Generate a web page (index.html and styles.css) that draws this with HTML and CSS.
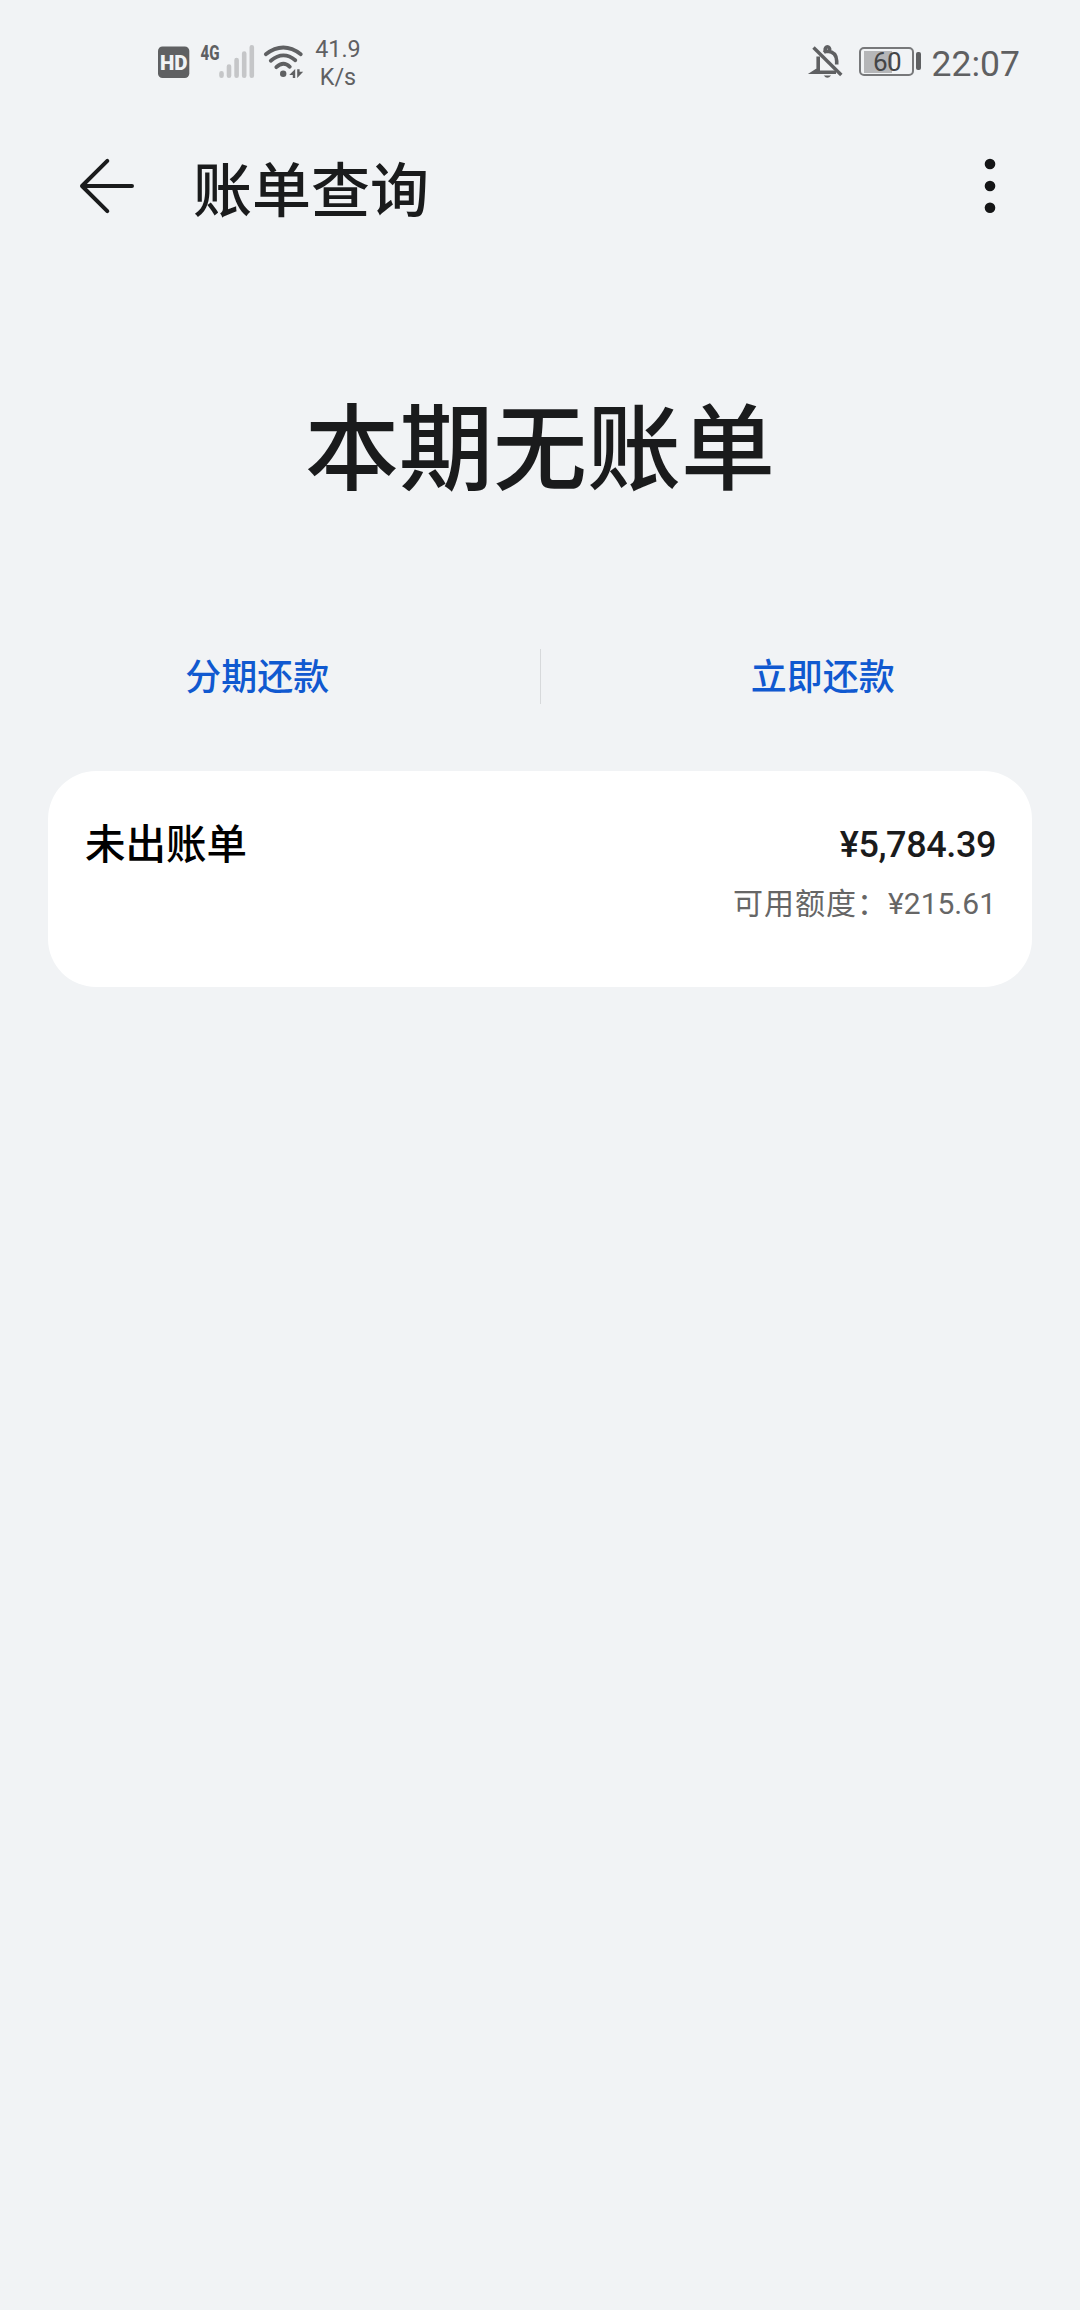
FILE: index.html
```html
<!DOCTYPE html>
<html lang="zh-CN">
<head>
<meta charset="utf-8">
<title>账单查询</title>
<link rel="stylesheet" href="styles.css">
</head>
<body>
<div class="status">
  <div class="status-left">
    <svg class="icon" width="32" height="32" viewBox="158 46 32 32"><rect x="158" y="46.5" width="31.3" height="31.5" rx="4.5" fill="#5f6062"/><text x="160" y="70.1" class="hd" textLength="27.6" lengthAdjust="spacingAndGlyphs">HD</text></svg>
    <svg class="icon signal" width="56" height="36" viewBox="200 44 56 36"><text x="200.6" y="60" class="net" textLength="19" lengthAdjust="spacingAndGlyphs">4G</text><path d="M221.5 73.3v2.4M229 66.5v9.2M236.6 60v15.7M244.2 53.5v22.2M251.8 47.3v28.4" stroke="#c5c6c8" stroke-width="4.6" stroke-linecap="round"/></svg>
    <svg class="icon wifi" width="42" height="36" viewBox="263 44 42 36" fill="none" stroke="#5f6062" stroke-width="3.8" stroke-linecap="round"><path d="M265.8 54.2Q283.3 40.7 300.8 54.2M270.8 60.7Q283.3 50.2 295.3 60.3M276.3 67.2Q283.3 60.5 289.8 66.8"/><circle cx="283.2" cy="73.8" r="3.2" fill="#5f6062" stroke="none"/><path d="M295.2 69v9h-2.4v-3h-3.6zM297.2 78v-8.8h2.4v2.6h3.6z" fill="#5f6062" stroke="none"/></svg>
    <div class="speed"><span>41.9</span><span>K/s</span></div>
  </div>
  <div class="status-right">
    <svg class="icon" width="32" height="36" viewBox="811 43 32 36" fill="none" stroke="#5f6062" stroke-width="3.6"><path d="M818.2 56.5V69.5L814 72.2H836M823.8 52.4Q825.5 51.2 827.7 51.2Q836.4 51.8 836.7 61V64.5M825.2 50.5C824.6 45.5 830.2 45.5 829.7 50.5"/><path d="M813.5 47.5L841.3 75" stroke-width="3.4"/><path d="M823.7 75.5h7.4q-3.7 4.4-7.4 0z" fill="#5f6062" stroke="none"/></svg>
    <div class="battery"><span class="charge"></span><span class="percent">60</span></div>
    <span class="cap"></span>
    <span class="clock">22:07</span>
  </div>
</div>
<header class="bar">
  <svg class="icon" width="58" height="58" viewBox="78 157 58 58" fill="none" stroke="#1a1b1c" stroke-width="4" stroke-linecap="round" stroke-linejoin="round"><path d="M107.3 160.8L82 186L107.3 211.2M82.5 186H132"/></svg>
  <h1 class="title">账单查询</h1>
  <svg class="icon" width="12" height="58" viewBox="984 157 12 58" fill="#141516"><circle cx="990" cy="164" r="5.3"/><circle cx="990" cy="186" r="5.3"/><circle cx="990" cy="207.8" r="5.3"/></svg>
</header>
<main>
  <h2 class="headline">本期无账单</h2>
  <nav class="actions">
    <a class="action">分期还款</a>
    <span class="divider"></span>
    <a class="action">立即还款</a>
  </nav>
  <section class="card">
    <span class="card-title">未出账单</span>
    <div class="amounts">
      <span class="amount">¥5,784.39</span>
      <span class="limit"><span class="limit-label">可用额度：</span>¥215.61</span>
    </div>
  </section>
</main>
</body>
</html>
```
FILE: styles.css
```css
* { box-sizing: border-box; }
body {
  margin: 0;
  min-height: 2310px;
  background: #f1f3f5;
  color: #1a1b1c;
  font-family: Roboto, "Noto Sans CJK SC", sans-serif;
}
.icon { display: block; flex: none; overflow: visible; }
.status {
  display: flex;
  justify-content: space-between;
  height: 124px;
  padding: 0 60px 0 158px;
  color: #5f6062;
}
.status-left, .status-right { display: flex; align-items: flex-start; }
.status-left .icon { margin-top: 46px; }
.status-left .signal { margin: 44px 0 0 10px; }
.status-left .wifi { margin: 44px 0 0 7px; }
.hd { font: 900 20.5px Roboto, sans-serif; fill: #f1f3f5; }
.net { font: 800 20px Roboto, sans-serif; fill: #5f6062; }
.speed {
  display: flex;
  flex-direction: column;
  align-items: center;
  width: 50px;
  margin: 35px 0 0 8px;
  font-size: 23.3px;
  line-height: 28px;
}
.status-right .icon { margin-top: 43px; }
.battery {
  position: relative;
  width: 55px;
  height: 29px;
  margin: 47px 0 0 16px;
  padding: 3px;
  border: 2px solid #77787a;
  border-radius: 5px;
}
.charge { display: block; width: 28px; height: 22px; margin-top: -1px; background: #b5b6b8; }
.percent {
  position: absolute;
  inset: 0 0 0 2px;
  text-align: center;
  font-size: 26px;
  line-height: 26px;
  letter-spacing: -0.5px;
  color: #444547;
}
.cap { width: 5px; height: 18px; margin: 52px 0 0 2px; border-radius: 2px; background: #5f6062; }
.clock { margin: 43px 0 0 11px; font-size: 35.5px; line-height: 42px; }
.bar {
  display: flex;
  align-items: center;
  height: 124px;
  padding: 0 84px 0 78px;
}
.title { flex: 1; margin: 11px 0 0 57px; font-size: 59px; line-height: 80px; font-weight: 500; }
.headline {
  margin: 0;
  padding-top: 135px;
  height: 401px;
  text-align: center;
  font-size: 94px;
  line-height: 136px;
  font-weight: 500;
}
.actions { display: flex; align-items: center; gap: 25px; height: 55px; }
.action {
  flex: 1;
  padding-top: 3px;
  text-align: center;
  font-size: 36px;
  line-height: 52px;
  font-weight: 500;
  color: #1059d0;
}
.divider { width: 1px; height: 55px; background: #d7d9db; }
.card {
  display: flex;
  justify-content: space-between;
  height: 216px;
  margin: 67px 48px 0;
  padding: 43px 36px 0 37px;
  border-radius: 48px;
  background: #fff;
}
.card-title { padding-top: 1px; font-size: 40.5px; line-height: 60px; font-weight: 500; color: #000; }
.amounts { display: flex; flex-direction: column; align-items: flex-end; }
.amount { font-size: 36px; line-height: 62px; font-weight: 500; letter-spacing: -0.4px; }
.limit { padding-top: 1px; font-size: 30px; line-height: 54px; color: #666; }
.limit-label { letter-spacing: 1px; }
```
